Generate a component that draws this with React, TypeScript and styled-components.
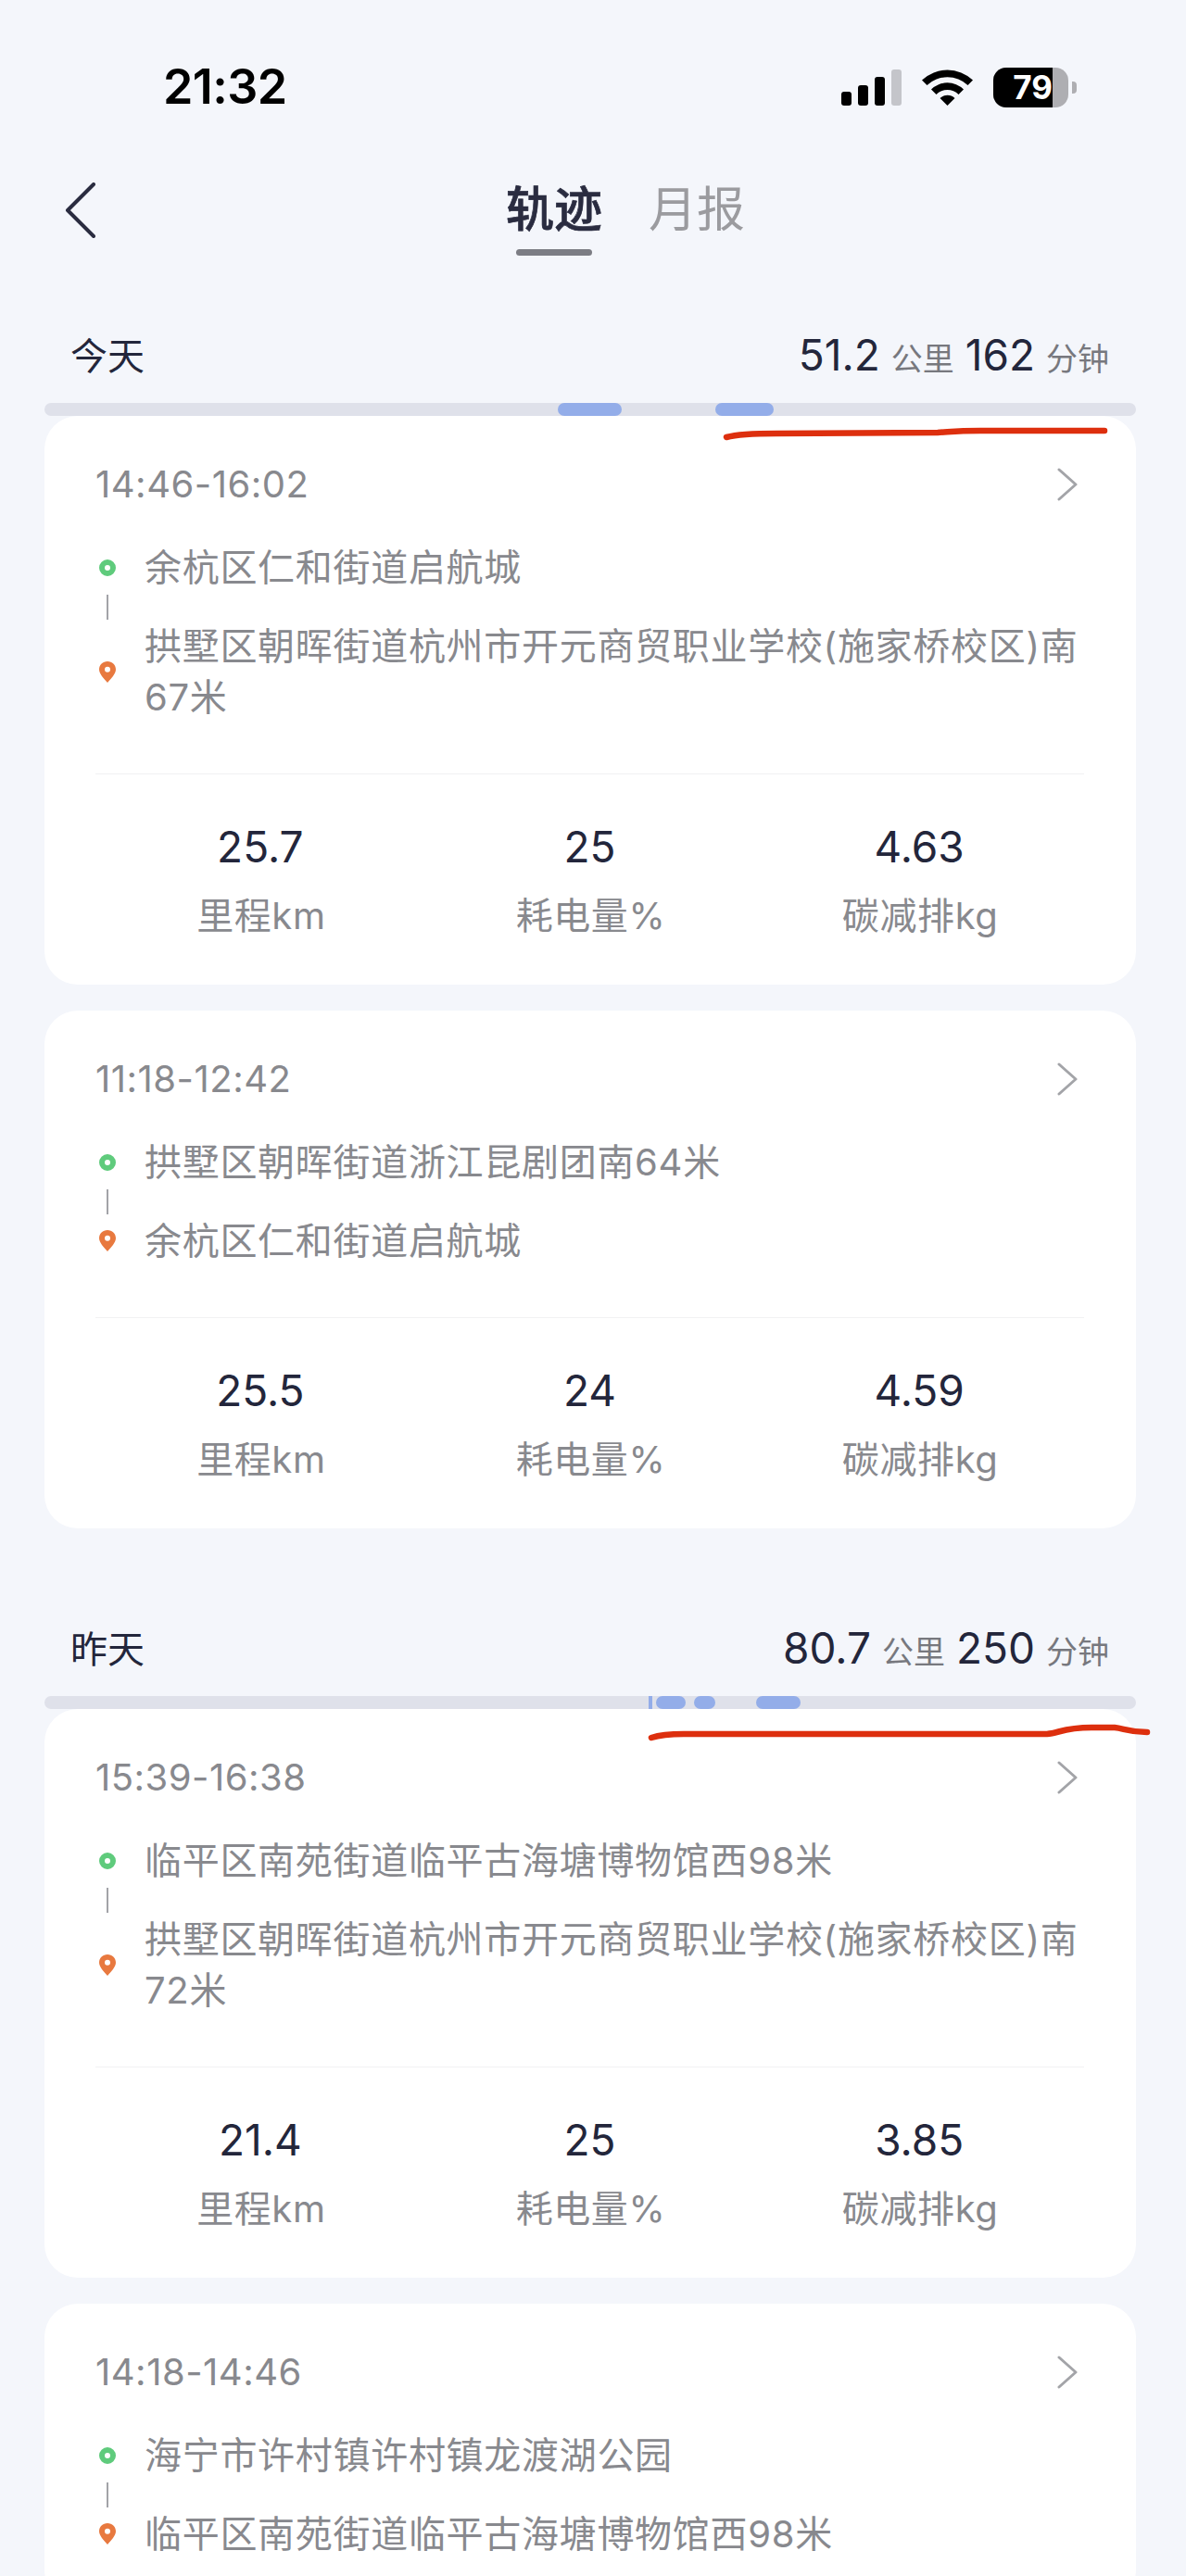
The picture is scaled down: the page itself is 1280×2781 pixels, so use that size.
import React from "react";
import styled, { createGlobalStyle } from "styled-components";

const GlobalStyle = createGlobalStyle`
  html, body {
    margin: 0;
    padding: 0;
    background: #f4f6fb;
  }
  * {
    box-sizing: border-box;
  }
`;

const Page = styled.div`
  width: 1280px;
  height: 2781px;
  overflow: hidden;
  background: #f4f6fb;
  font-family: Inter, "Noto Sans CJK SC", sans-serif;
  color: #23263b;
`;

const StatusBar = styled.div`
  display: flex;
  align-items: center;
  justify-content: space-between;
  height: 44px;
  margin-top: 72px;
  padding: 0 118px 0 176px;
`;

const Clock = styled.div`
  font-size: 52px;
  font-weight: 600;
  letter-spacing: -0.6px;
  line-height: 44px;
  color: #000;
`;

const StatusIcons = styled.div`
  display: flex;
  align-items: center;
  gap: 22px;
`;

const SignalBars = styled.div`
  display: flex;
  align-items: flex-end;
  gap: 7px;
  height: 40px;
`;

const SignalBar = styled.span<{ $height: number; $off?: boolean }>`
  width: 11px;
  height: ${(p) => p.$height}px;
  border-radius: 3px;
  background: ${(p) => (p.$off ? "#c4c5ca" : "#000")};
`;

const Battery = styled.div`
  position: relative;
  width: 81px;
  height: 43px;
  border-radius: 14px;
  overflow: hidden;
  background: #aeaeb2;
  display: flex;
`;

const BatteryLevel = styled.div`
  width: 64px;
  background: #000;
  color: #fff;
  font-size: 35px;
  font-weight: 700;
  line-height: 43px;
  text-align: right;
`;

const BatteryWrap = styled.div`
  display: flex;
  align-items: center;
  gap: 4px;
`;

const BatteryNub = styled.span`
  width: 5px;
  height: 13px;
  border-radius: 0 4px 4px 0;
  background: #aeaeb2;
`;

const NavRow = styled.div`
  display: flex;
  align-items: flex-start;
  gap: 442px;
  margin-top: 81px;
  padding-left: 70px;
`;

const Tabs = styled.div`
  display: flex;
  gap: 50px;
`;

const Tab = styled.div<{ $active?: boolean }>`
  display: flex;
  flex-direction: column;
  align-items: center;
  font-size: 52px;
  line-height: 60px;
  font-weight: ${(p) => (p.$active ? 500 : 400)};
  color: ${(p) => (p.$active ? "#2a2c40" : "#9b9b9f")};
  -webkit-text-stroke: ${(p) => (p.$active ? "0.7px #2a2c40" : "0")};
  &::after {
    content: "";
    display: ${(p) => (p.$active ? "block" : "none")};
    width: 82px;
    height: 7px;
    margin-top: 12px;
    border-radius: 4px;
    background: #7c7d84;
  }
`;

const Section = styled.section<{ $top: number }>`
  margin-top: ${(p) => p.$top}px;
  padding: 0 54px 0 48px;
`;

const DayHeader = styled.div`
  display: flex;
  align-items: center;
  justify-content: space-between;
  height: 50px;
  padding: 0 29px 0 28px;
  margin-bottom: 25px;
`;

const DayLabel = styled.div`
  font-size: 40px;
  line-height: 50px;
`;

const DaySummary = styled.div`
  display: flex;
  align-items: baseline;
  gap: 12px;
`;

const SummaryValue = styled.span`
  font-size: 46px;
  line-height: 50px;
`;

const SummaryUnit = styled.span`
  font-size: 34px;
  line-height: 50px;
  color: #77787e;
`;

const Track = styled.div`
  position: relative;
  height: 14px;
  border-radius: 7px;
  background: #dfe1ea;
`;

const TrackSegment = styled.span<{ $thin?: boolean }>`
  position: absolute;
  top: 0;
  bottom: 0;
  border-radius: ${(p) => (p.$thin ? "0" : "7px")};
  background: #93ade9;
`;

// hand-drawn marker line crossing the top of the first card
const MarkerStroke = styled.svg`
  position: absolute;
  left: 0;
  top: 0;
  width: 1178px;
  height: 60px;
  overflow: visible;
  z-index: 2;
`;

const Card = styled.article`
  margin-bottom: 28px;
  padding: 48px 56px 47px 55px;
  background: #fff;
  border-radius: 36px;
`;

const CardTop = styled.div`
  display: flex;
  align-items: center;
  justify-content: space-between;
  height: 52px;
  margin-bottom: 36px;
  padding-right: 7px;
`;

const TimeRange = styled.div`
  font-size: 40px;
  line-height: 52px;
  letter-spacing: 0.5px;
  color: #88898e;
`;

const Route = styled.div`
  display: grid;
  grid-template-columns: 26px 1fr;
  column-gap: 27px;
`;

const Marker = styled.div`
  display: flex;
  align-items: center;
  justify-content: center;
`;

const Connector = styled.div`
  height: 30px;
  display: flex;
  justify-content: center;
  align-items: center;
  grid-column: 1;
  &::before {
    content: "";
    width: 2px;
    height: 27px;
    background: #a2a3a8;
  }
`;

const GreenDot = styled.span`
  width: 18px;
  height: 18px;
  border-radius: 50%;
  border: 6px solid #5fcb7c;
  background: #fff;
`;

const Address = styled.div`
  font-size: 40px;
  line-height: 55px;
  letter-spacing: 0.7px;
  color: #88898e;
`;

const Divider = styled.div`
  height: 1px;
  margin: 55px 0 52px;
  background: #f1f1f3;
`;

const Stats = styled.div`
  display: grid;
  grid-template-columns: repeat(3, 1fr);
`;

const Stat = styled.div`
  display: flex;
  flex-direction: column;
  align-items: center;
  gap: 21px;
`;

const StatValue = styled.div`
  font-size: 46px;
  line-height: 52px;
`;

const StatLabel = styled.div`
  font-size: 40px;
  line-height: 55px;
  letter-spacing: 0.6px;
  padding-left: 2px;
  color: #88898e;
`;

type Trip = {
  time: string;
  from: string;
  to: string;
  km: string;
  power: string;
  carbon: string;
};

type Day = {
  label: string;
  km: string;
  minutes: string;
  top: number;
  segments: [number, number][];
  stroke: string;
  trips: Trip[];
};

const TRACK_WIDTH = 1178;

const days: Day[] = [
  {
    label: "今天",
    km: "51.2",
    minutes: "162",
    top: 84,
    segments: [
      [554, 623],
      [724, 787],
    ],
    stroke: "M736 37 C747 34 760 33 790 33 L964 32 C980 31 985 30 1010 30 L1144 30",
    trips: [
      {
        time: "14:46-16:02",
        from: "余杭区仁和街道启航城",
        to: "拱墅区朝晖街道杭州市开元商贸职业学校(施家桥校区)南67米",
        km: "25.7",
        power: "25",
        carbon: "4.63",
      },
      {
        time: "11:18-12:42",
        from: "拱墅区朝晖街道浙江昆剧团南64米",
        to: "余杭区仁和街道启航城",
        km: "25.5",
        power: "24",
        carbon: "4.59",
      },
    ],
  },
  {
    label: "昨天",
    km: "80.7",
    minutes: "250",
    top: 106,
    segments: [
      [652, 656],
      [660, 692],
      [701, 724],
      [768, 816],
    ],
    stroke: "M655 45 C664 42 674 41 690 41 L1082 41 C1095 40 1100 34 1130 34 L1155 34 C1165 35 1170 39 1190 39",
    trips: [
      {
        time: "15:39-16:38",
        from: "临平区南苑街道临平古海塘博物馆西98米",
        to: "拱墅区朝晖街道杭州市开元商贸职业学校(施家桥校区)南72米",
        km: "21.4",
        power: "25",
        carbon: "3.85",
      },
      {
        time: "14:18-14:46",
        from: "海宁市许村镇许村镇龙渡湖公园",
        to: "临平区南苑街道临平古海塘博物馆西98米",
        km: "",
        power: "",
        carbon: "",
      },
    ],
  },
];

const WifiIcon = () => (
  <svg width="55" height="40" viewBox="0 0 55 40" fill="#000">
    <path d="M0 12.5 A40 40 0 0 1 55 12.5 L49.5 18 A32 32 0 0 0 5.5 18 Z" />
    <path d="M10 22.5 A25 25 0 0 1 45 22.5 L39.5 28 A17 17 0 0 0 15.5 28 Z" />
    <path d="M19.5 32 A11.5 11.5 0 0 1 35.5 32 L27.5 40 Z" />
  </svg>
);

const BackIcon = () => (
  <svg width="34" height="60" viewBox="0 0 34 60" fill="none">
    <path d="M31 2 L3 30 L31 58" stroke="#2a2c40" strokeWidth="4" strokeLinecap="round" strokeLinejoin="round" />
  </svg>
);

const ChevronIcon = () => (
  <svg width="22" height="36" viewBox="0 0 22 36" fill="none">
    <path d="M2 2 L20 18 L2 34" stroke="#a3a4a8" strokeWidth="3" strokeLinecap="round" strokeLinejoin="round" />
  </svg>
);

const PinIcon = () => (
  <svg width="18" height="23" viewBox="0 0 18 23">
    <path
      fillRule="evenodd"
      fill="#e8793f"
      d="M9 0 C14 0 18 3.8 18 8.8 C18 13.5 13 18.5 9 23 C5 18.5 0 13.5 0 8.8 C0 3.8 4 0 9 0 Z M9 5.8 A3 3 0 1 0 9 11.8 A3 3 0 1 0 9 5.8 Z"
    />
  </svg>
);

const TripCard = ({ trip }: { trip: Trip }) => (
  <Card>
    <CardTop>
      <TimeRange>{trip.time}</TimeRange>
      <ChevronIcon />
    </CardTop>
    <Route>
      <Marker>
        <GreenDot />
      </Marker>
      <Address>{trip.from}</Address>
      <Connector />
      <span />
      <Marker>
        <PinIcon />
      </Marker>
      <Address>{trip.to}</Address>
    </Route>
    {trip.km && (
      <>
        <Divider />
        <Stats>
          <Stat>
            <StatValue>{trip.km}</StatValue>
            <StatLabel>里程km</StatLabel>
          </Stat>
          <Stat>
            <StatValue>{trip.power}</StatValue>
            <StatLabel>耗电量%</StatLabel>
          </Stat>
          <Stat>
            <StatValue>{trip.carbon}</StatValue>
            <StatLabel>碳减排kg</StatLabel>
          </Stat>
        </Stats>
      </>
    )}
  </Card>
);

const DaySection = ({ day }: { day: Day }) => (
  <Section $top={day.top}>
    <DayHeader>
      <DayLabel>{day.label}</DayLabel>
      <DaySummary>
        <SummaryValue>{day.km}</SummaryValue>
        <SummaryUnit>公里</SummaryUnit>
        <SummaryValue>{day.minutes}</SummaryValue>
        <SummaryUnit>分钟</SummaryUnit>
      </DaySummary>
    </DayHeader>
    <Track>
      {day.segments.map(([start, end]) => (
        <TrackSegment
          key={start}
          $thin={end - start < 8}
          style={{
            left: `${(start / TRACK_WIDTH) * 100}%`,
            width: `${((end - start) / TRACK_WIDTH) * 100}%`,
          }}
        />
      ))}
      <MarkerStroke viewBox="0 0 1178 60" fill="none">
        <path d={day.stroke} stroke="#dd2f0e" strokeWidth="6.5" strokeLinecap="round" strokeLinejoin="round" />
      </MarkerStroke>
    </Track>
    {day.trips.map((trip) => (
      <TripCard key={trip.time} trip={trip} />
    ))}
  </Section>
);

export default function App() {
  return (
    <>
      <GlobalStyle />
      <Page>
        <StatusBar>
          <Clock>21:32</Clock>
          <StatusIcons>
            <SignalBars>
              <SignalBar $height={15} />
              <SignalBar $height={22} />
              <SignalBar $height={31} />
              <SignalBar $height={39} $off />
            </SignalBars>
            <WifiIcon />
            <BatteryWrap>
              <Battery>
                <BatteryLevel>79</BatteryLevel>
              </Battery>
              <BatteryNub />
            </BatteryWrap>
          </StatusIcons>
        </StatusBar>
        <NavRow>
          <BackIcon />
          <Tabs>
            <Tab $active>轨迹</Tab>
            <Tab>月报</Tab>
          </Tabs>
        </NavRow>
        {days.map((day) => (
          <DaySection key={day.label} day={day} />
        ))}
      </Page>
    </>
  );
}
